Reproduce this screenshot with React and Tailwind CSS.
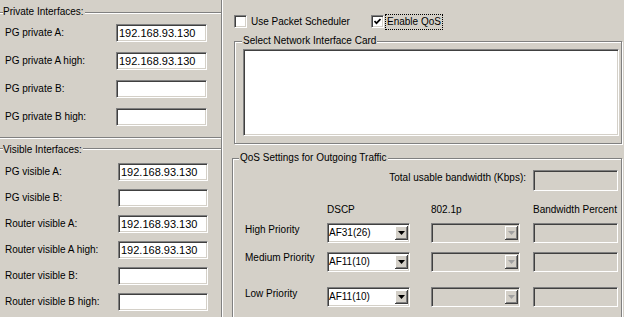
import React from "react";

const sunken =
  "border border-t-[#808080] border-l-[#808080] border-b-white border-r-white shadow-[inset_1px_1px_0_#404040,inset_-1px_-1px_0_#d4d0c8]";

function Field({ value, w }) {
  return (
    <div
      className={`h-[18px] bg-white ${sunken} px-[2px] text-[11px] leading-[16px] text-black whitespace-nowrap overflow-hidden`}
      style={{ width: w }}
    >
      {value}
    </div>
  );
}

function Triangle({ disabled }) {
  return (
    <svg width="7" height="4" viewBox="0 0 7 4">
      <polygon points="0,0 7,0 3.5,4" fill={disabled ? "#a0a0a0" : "#000"} />
    </svg>
  );
}

function Combo({ value, w, disabled }) {
  return (
    <div
      className={`h-[20px] ${disabled ? "bg-[#d4d0c8]" : "bg-white"} ${sunken} flex items-center pl-[1px] pr-[1px] py-[2px]`}
      style={{ width: w }}
    >
      <span className="flex-1 text-[10px] leading-[12px] text-black whitespace-nowrap">{value}</span>
      <div className="h-[14px] w-[13px] bg-[#d4d0c8] shadow-[inset_-1px_-1px_0_#404040,inset_1px_1px_0_#fff,inset_-2px_-2px_0_#808080] flex items-center justify-center">
        <Triangle disabled={disabled} />
      </div>
    </div>
  );
}

function Box({ w, h = 20 }) {
  return <div className={`bg-[#d4d0c8] ${sunken}`} style={{ width: w, height: h }} />;
}

function Checkbox({ checked }) {
  return (
    <div className={`w-[13px] h-[13px] bg-white ${sunken} flex items-center justify-center shrink-0`}>
      {checked && (
        <svg width="7" height="7" viewBox="0 0 7 7">
          <path d="M0.5 3 L2.5 5.2 L6.5 1" stroke="#000" strokeWidth="1.7" fill="none" />
        </svg>
      )}
    </div>
  );
}

function Row({ label, value, labelW, fieldW }) {
  return (
    <div className="flex items-center h-[18px]">
      <span className="pl-[5px] text-[10px] leading-[12px] -mt-[1px] whitespace-nowrap" style={{ width: labelW }}>
        {label}
      </span>
      <Field value={value} w={fieldW} />
    </div>
  );
}

export default function App() {
  const ip = "192.168.93.130";
  return (
    <div className="w-[624px] h-[317px] overflow-hidden bg-[#d4d0c8] flex font-['Liberation_Sans',Arial,sans-serif] text-black text-[10px] leading-[12px]">
      {/* Left column */}
      <div className="w-[222px] h-full border-r border-r-[#808080] shadow-[1px_0_0_#fff] shrink-0">
        {/* Private */}
        <div className="relative mt-[12px] border-t border-b border-[#808080] shadow-[inset_0_1px_0_#fff,0_1px_0_#fff] pt-[11px] pb-[11px] flex flex-col gap-[10px]">
          <span className="absolute left-[3px] -top-[7px] bg-[#d4d0c8] pr-[1px]">Private Interfaces:</span>
          <Row label="PG private A:" value={ip} labelW={116} fieldW={91} />
          <Row label="PG private A high:" value={ip} labelW={116} fieldW={91} />
          <Row label="PG private B:" value="" labelW={116} fieldW={91} />
          <Row label="PG private B high:" value="" labelW={116} fieldW={91} />
        </div>
        {/* Visible */}
        <div className="relative mt-[10px] border-t border-[#808080] shadow-[inset_0_1px_0_#fff] pt-[14px] flex flex-col gap-[8px]">
          <span className="absolute left-[3px] -top-[5px] bg-[#d4d0c8] pr-[1px]">Visible Interfaces:</span>
          <Row label="PG visible A:" value={ip} labelW={118} fieldW={90} />
          <Row label="PG visible B:" value="" labelW={118} fieldW={90} />
          <Row label="Router visible A:" value={ip} labelW={118} fieldW={90} />
          <Row label="Router visible A high:" value={ip} labelW={118} fieldW={90} />
          <Row label="Router visible B:" value="" labelW={118} fieldW={90} />
          <Row label="Router visible B high:" value="" labelW={118} fieldW={90} />
        </div>
      </div>

      {/* Right column */}
      <div className="flex-1 flex flex-col">
        {/* checkboxes */}
        <div className="shrink-0 mt-[15px] ml-[12px] h-[13px] flex items-center">
          <div className="w-[137px] flex items-center">
            <Checkbox />
            <span className="ml-[4px] text-[10px] leading-[12px] whitespace-nowrap">Use Packet Scheduler</span>
          </div>
          <div className="flex items-center">
            <Checkbox checked />
            <span className="ml-[1px] border border-dotted border-black px-[1px] leading-[14px] whitespace-nowrap">
              Enable QoS
            </span>
          </div>
        </div>

        {/* NIC group */}
        <div className="shrink-0 relative mt-[13px] ml-[12px] w-[388px] h-[103px] border border-[#808080] shadow-[inset_1px_1px_0_#fff,1px_1px_0_#fff] pl-[8px] pt-[7px]">
          <span className="absolute left-[7px] -top-[7px] bg-[#d4d0c8] px-[1px] whitespace-nowrap">
            Select Network Interface Card
          </span>
          <div className={`w-[376px] h-[87px] bg-white ${sunken}`} />
        </div>

        {/* QoS group */}
        <div className="shrink-0 relative mt-[14px] ml-[10px] w-[390px] h-[200px] border border-[#808080] shadow-[inset_1px_1px_0_#fff,1px_1px_0_#fff] pt-[11px] pr-[3px]">
          <span className="absolute left-[6px] -top-[7px] bg-[#d4d0c8] px-[1px] whitespace-nowrap">
            QoS Settings for Outgoing Traffic
          </span>
          <div className="flex justify-end items-start gap-[7px]">
            <span className="mt-[2px] whitespace-nowrap">Total usable bandwidth (Kbps):</span>
            <Box w={85} h={21} />
          </div>
          <div className="grid grid-cols-[82px_104px_102px_85px] pl-[12px] mt-[13px]">
            <span />
            <span>DSCP</span>
            <span>802.1p</span>
            <span className="whitespace-nowrap">Bandwidth Percent</span>
          </div>
          <div className="grid grid-cols-[82px_104px_102px_85px] pl-[12px] mt-[7px] items-start">
            <span className="pt-[1px] whitespace-nowrap">High Priority</span>
            <Combo value="AF31(26)" w={83} />
            <Combo value="" w={89} disabled />
            <Box w={85} />
          </div>
          <div className="grid grid-cols-[82px_104px_102px_85px] pl-[12px] mt-[9px] items-start">
            <span className="whitespace-nowrap">Medium Priority</span>
            <Combo value="AF11(10)" w={83} />
            <Combo value="" w={89} disabled />
            <Box w={85} />
          </div>
          <div className="grid grid-cols-[82px_104px_102px_85px] pl-[12px] mt-[15px] items-start">
            <span className="pt-[1px] whitespace-nowrap">Low Priority</span>
            <Combo value="AF11(10)" w={83} />
            <Combo value="" w={89} disabled />
            <Box w={85} />
          </div>
        </div>
      </div>
    </div>
  );
}
